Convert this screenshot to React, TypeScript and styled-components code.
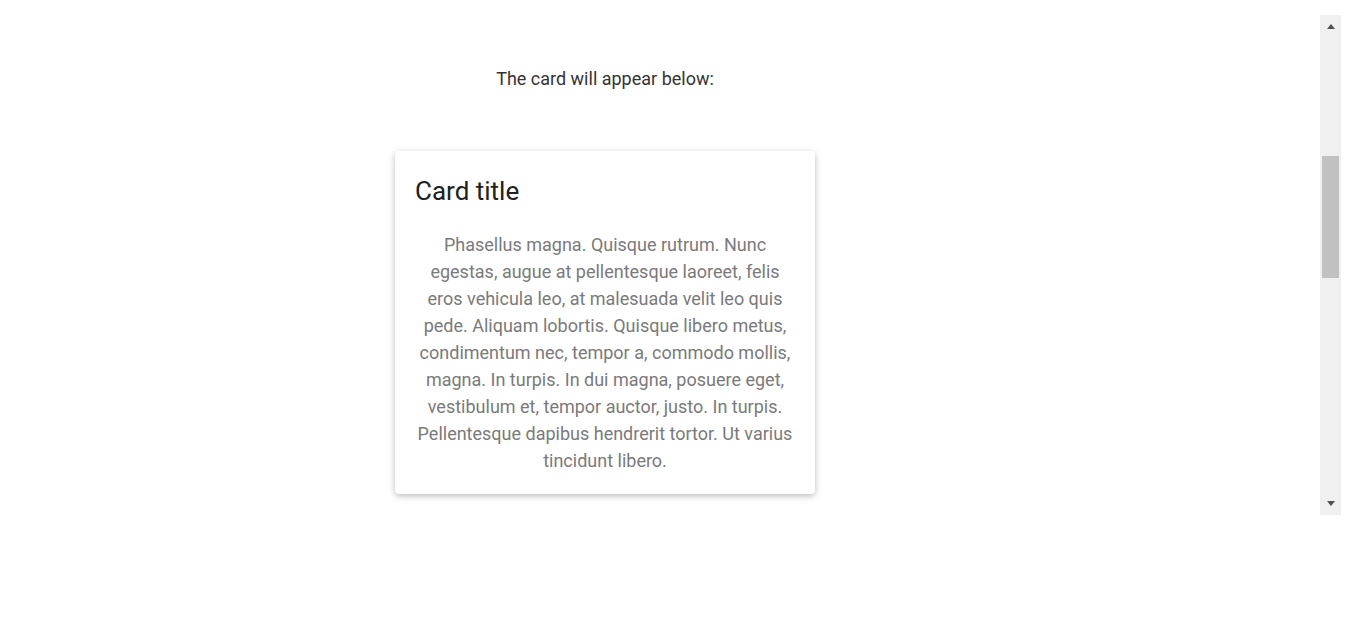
import React from 'react';
import styled, { createGlobalStyle } from 'styled-components';

const GlobalStyle = createGlobalStyle`
  html, body {
    margin: 0;
    padding: 0;
    background: #fff;
  }
  body {
    font-family: Roboto, "Liberation Sans", sans-serif;
    font-weight: 400;
  }
`;

const Page = styled.div`
  display: flex;
  align-items: flex-start;
  height: 641px;
  padding-right: 7px;
  box-sizing: border-box;
  overflow: hidden;
`;

const Main = styled.main`
  width: 1210px;
  padding-top: 65px;
  display: flex;
  flex-direction: column;
  align-items: center;
`;

const Lead = styled.p`
  margin: 0 0 59px;
  font-size: 18px;
  line-height: 27px;
  color: #333;
`;

const Card = styled.div`
  width: 420px;
  box-sizing: border-box;
  padding: 25px 20px 20px;
  background: #fff;
  border-radius: 4px;
  box-shadow: 0 2px 5px 0 rgba(0, 0, 0, 0.16), 0 2px 10px 0 rgba(0, 0, 0, 0.12);
`;

const CardTitle = styled.h4`
  margin: 0 0 24px;
  font-size: 26px;
  line-height: 31px;
  font-weight: 400;
  color: #212121;
`;

const CardText = styled.p`
  margin: 0;
  font-size: 18px;
  line-height: 27px;
  text-align: center;
  color: #7a7a7a;
`;

/* the page's scrollbar, drawn since the screenshot hides real ones */
const Rail = styled.div`
  margin: 15px 0 0 auto;
  width: 21px;
  height: 500px;
  background: #f0f0f0;
  display: flex;
  flex-direction: column;
`;

const ArrowButton = styled.div<{ $dir: 'up' | 'down' }>`
  height: 21px;
  flex: none;
  display: flex;
  align-items: center;
  justify-content: center;
  padding-top: ${(p) => (p.$dir === 'up' ? '2px' : '0')};
  padding-bottom: ${(p) => (p.$dir === 'down' ? '2px' : '0')};
  box-sizing: border-box;

  &::before {
    content: '';
    width: 0;
    height: 0;
    border-left: 4px solid transparent;
    border-right: 4px solid transparent;
    ${(p) => (p.$dir === 'up' ? 'border-bottom: 5px solid #505050;' : 'border-top: 5px solid #505050;')}
  }
`;

const Track = styled.div`
  flex: 1;
  padding: 120px 2px 0;
`;

const Thumb = styled.div`
  height: 122px;
  background: #c1c1c1;
`;

export default function App() {
  return (
    <>
      <GlobalStyle />
      <Page>
        <Main>
          <Lead>The card will appear below:</Lead>
          <Card>
            <CardTitle>Card title</CardTitle>
            <CardText>
              Phasellus magna. Quisque rutrum. Nunc egestas, augue at pellentesque laoreet, felis eros
              vehicula leo, at malesuada velit leo quis pede. Aliquam lobortis. Quisque libero metus,
              condimentum nec, tempor a, commodo mollis, magna. In turpis. In dui magna, posuere eget,
              vestibulum et, tempor auctor, justo. In turpis. Pellentesque dapibus hendrerit tortor. Ut
              varius tincidunt libero.
            </CardText>
          </Card>
        </Main>
        <Rail>
          <ArrowButton $dir="up" />
          <Track>
            <Thumb />
          </Track>
          <ArrowButton $dir="down" />
        </Rail>
      </Page>
    </>
  );
}
